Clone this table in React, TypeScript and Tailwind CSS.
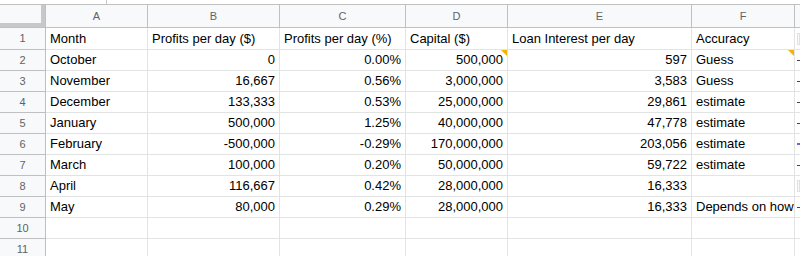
import React from "react";

type Cell = { t: string; r?: boolean; note?: boolean };

const widths = ["w-[102px]", "w-[132px]", "w-[126px]", "w-[102px]", "w-[184px]", "w-[103px]"];
const letters = ["A", "B", "C", "D", "E", "F"];

const L = (t: string): Cell => ({ t });
const R = (t: string): Cell => ({ t, r: true });

const rows: Cell[][] = [
  [L("Month"), L("Profits per day ($)"), L("Profits per day (%)"), L("Capital ($)"), L("Loan Interest per day"), L("Accuracy")],
  [L("October"), R("0"), R("0.00%"), { t: "500,000", r: true, note: true }, R("597"), { t: "Guess", note: true }],
  [L("November"), R("16,667"), R("0.56%"), R("3,000,000"), R("3,583"), L("Guess")],
  [L("December"), R("133,333"), R("0.53%"), R("25,000,000"), R("29,861"), L("estimate")],
  [L("January"), R("500,000"), R("1.25%"), R("40,000,000"), R("47,778"), L("estimate")],
  [L("February"), R("-500,000"), R("-0.29%"), R("170,000,000"), R("203,056"), L("estimate")],
  [L("March"), R("100,000"), R("0.20%"), R("50,000,000"), R("59,722"), L("estimate")],
  [L("April"), R("116,667"), R("0.42%"), R("28,000,000"), R("16,333"), L("")],
  [L("May"), R("80,000"), R("0.29%"), R("28,000,000"), R("16,333"), L("Depends on how")],
  [L(""), L(""), L(""), L(""), L(""), L("")],
  [L(""), L(""), L(""), L(""), L(""), L("")],
];

const gMarks = ["box", "dash", "dash", "dash", "dash", "blue", "dash", "box", "dash", "", ""];

function GCell({ kind }: { kind: string }) {
  return (
    <div className="flex-1 flex items-center pl-[2px] border-b border-[#e2e3e3] overflow-hidden">
      {kind === "dash" && <span className="block w-[3px] h-[1px] bg-[#444]" />}
      {kind === "blue" && <span className="block w-[3px] h-[2px] bg-[#6b6bd6]" />}
      {kind === "box" && <span className="block w-[4px] h-[12px] border border-[#e0e0e0] bg-[#fafafa]" />}
    </div>
  );
}

export default function App() {
  return (
    <div
      className="w-[800px] h-[256px] overflow-hidden bg-white text-black"
      style={{ fontFamily: '"Liberation Sans", Arial, sans-serif' }}
    >
      {/* top strip */}
      <div className="h-[4px] relative">
        <div className="absolute left-[106px] top-0 w-[1px] h-[4px] bg-[#c8c8c8]" />
      </div>
      {/* column header */}
      <div className="flex h-[24px] border-t border-b border-[#c0c0c0] bg-[#f8f9fa]">
        <div className="w-[46px] shrink-0 relative border-r border-[#c0c0c0]">
          <div className="absolute right-0 top-0 w-[4px] h-full bg-[#c8c8c8]" />
          <div className="absolute left-0 bottom-0 w-full h-[4px] bg-[#c8c8c8]" />
        </div>
        {letters.map((l, i) => (
          <div
            key={l}
            className={`${widths[i]} shrink-0 flex items-center justify-center border-r border-[#c0c0c0] text-[11px] text-[#5f6368]`}
          >
            {l}
          </div>
        ))}
        <div className="flex-1" />
      </div>
      {/* body */}
      {rows.map((row, ri) => (
        <div key={ri} className={`flex ${ri === 0 ? "h-[22px]" : "h-[21px]"}`}>
          <div className="w-[46px] shrink-0 flex items-center justify-center bg-[#f8f9fa] border-r border-b border-[#c0c0c0] text-[11px] text-[#5f6368]">
            {ri + 1}
          </div>
          {row.map((c, ci) => (
            <div
              key={ci}
              className={`${widths[ci]} shrink-0 relative flex items-center border-r border-b border-[#e2e3e3] text-[13px] whitespace-nowrap ${
                c.r ? "justify-end pr-[4px]" : "justify-start pl-[4px]"
              } ${ci === 5 ? "overflow-visible z-10" : "overflow-hidden"}`}
            >
              {c.t}
              {c.note && (
                <span className="absolute top-0 right-0 w-0 h-0 border-t-[6px] border-t-[#f4b400] border-l-[6px] border-l-transparent" />
              )}
            </div>
          ))}
          <GCell kind={gMarks[ri]} />
        </div>
      ))}
    </div>
  );
}
